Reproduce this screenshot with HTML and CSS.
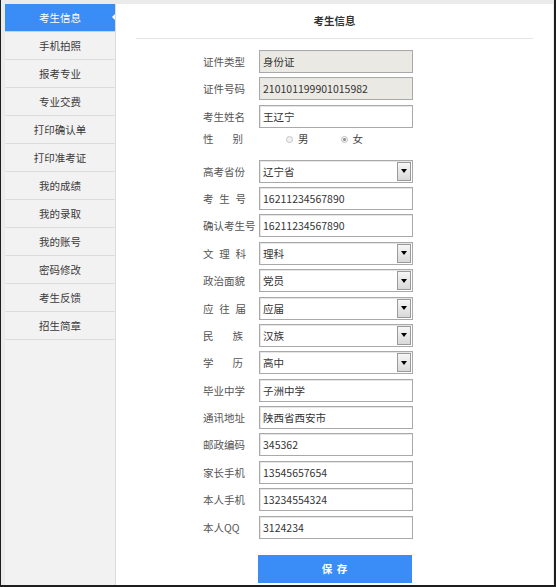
FILE: index.html
```html
<!DOCTYPE html>
<html lang="zh-CN">
<head>
<meta charset="utf-8">
<title>考生信息</title>
<link rel="stylesheet" href="styles.css">
</head>
<body>
<div class="frame">
  <div class="window">
    <aside class="sidebar">
      <div class="nav-item active">考生信息</div>
      <div class="nav-item">手机拍照</div>
      <div class="nav-item">报考专业</div>
      <div class="nav-item">专业交费</div>
      <div class="nav-item">打印确认单</div>
      <div class="nav-item">打印准考证</div>
      <div class="nav-item">我的成绩</div>
      <div class="nav-item">我的录取</div>
      <div class="nav-item">我的账号</div>
      <div class="nav-item">密码修改</div>
      <div class="nav-item">考生反馈</div>
      <div class="nav-item">招生简章</div>
    </aside>
    <main class="main">
      <div class="title">考生信息</div>
      <div class="form">
        <div class="label">证件类型</div>
        <div class="field readonly">身份证</div>

        <div class="label">证件号码</div>
        <div class="field readonly">210101199901015982</div>

        <div class="label">考生姓名</div>
        <div class="field">王辽宁</div>

        <div class="label top"><span class="sp2">性别</span></div>
        <div class="radios">
          <span class="radio"></span><span class="rtext">男</span>
          <span class="radio checked"></span><span class="rtext">女</span>
        </div>

        <div class="label">高考省份</div>
        <div class="field select"><span class="sel-text">辽宁省</span><span class="arrow"></span></div>

        <div class="label"><span class="sp3">考生号</span></div>
        <div class="field">16211234567890</div>

        <div class="label">确认考生号</div>
        <div class="field">16211234567890</div>

        <div class="label"><span class="sp3">文理科</span></div>
        <div class="field select"><span class="sel-text">理科</span><span class="arrow"></span></div>

        <div class="label">政治面貌</div>
        <div class="field select"><span class="sel-text">党员</span><span class="arrow"></span></div>

        <div class="label"><span class="sp3">应往届</span></div>
        <div class="field select"><span class="sel-text">应届</span><span class="arrow"></span></div>

        <div class="label"><span class="sp2">民族</span></div>
        <div class="field select"><span class="sel-text">汉族</span><span class="arrow"></span></div>

        <div class="label"><span class="sp2">学历</span></div>
        <div class="field select"><span class="sel-text">高中</span><span class="arrow"></span></div>

        <div class="label">毕业中学</div>
        <div class="field">子洲中学</div>

        <div class="label">通讯地址</div>
        <div class="field">陕西省西安市</div>

        <div class="label">邮政编码</div>
        <div class="field">345362</div>

        <div class="label">家长手机</div>
        <div class="field">13545657654</div>

        <div class="label">本人手机</div>
        <div class="field">13234554324</div>

        <div class="label">本人QQ</div>
        <div class="field">3124234</div>

        <div class="spacer"></div>
        <div class="save">保&nbsp;存</div>
      </div>
    </main>
  </div>
</div>
</body>
</html>
```

FILE: styles.css
```css
* { box-sizing: border-box; }
html, body {
  margin: 0;
  padding: 0;
}
body {
  width: 556px;
  height: 587px;
  overflow: hidden;
  font-family: "Noto Sans CJK SC", "Liberation Sans", sans-serif;
  font-size: 10.5px;
  color: #333;
}
.frame {
  width: 556px;
  height: 587px;
  background: #ebebeb;
  border-left: 1px solid #1e1e1e;
  border-right: 2px solid #1e1e1e;
  border-bottom: 2px solid #1e1e1e;
  padding: 4px 1px 0 4px;
}
.window {
  display: flex;
  height: 100%;
}
.sidebar {
  width: 111px;
  flex: none;
  background: #f3f2f2;
  border-right: 1px solid #dcdcdc;
}
.nav-item {
  position: relative;
  height: 28px;
  line-height: 27px;
  text-align: center;
  color: #3a3a3a;
  border-bottom: 1px solid #dcdcdc;
}
.nav-item.active {
  background: #3a8cf7;
  color: #fff;
  border-bottom-color: #b9d4f7;
}
.nav-item.active::after {
  content: "";
  position: absolute;
  right: 0;
  top: 10px;
  width: 0;
  height: 0;
  border-top: 3px solid transparent;
  border-bottom: 3px solid transparent;
  border-right: 3px solid #fff;
}
.main {
  flex: 1;
  background: #fff;
}
.title {
  height: 35px;
  line-height: 34px;
  margin: 0 20px;
  text-align: center;
  font-weight: bold;
  color: #333;
  border-bottom: 1px solid #e5e5e5;
}
.form {
  display: grid;
  grid-template-columns: 56px 154px;
  grid-auto-rows: 23px;
  row-gap: 4.4px;
  margin-top: 11px;
  padding-left: 87px;
}
.label {
  display: flex;
  align-items: center;
  white-space: nowrap;
  color: #555;
}
.label.top {
  align-items: flex-start;
  line-height: 14px;
}
.sp2, .sp3 {
  display: inline-block;
  text-align: justify;
  text-align-last: justify;
}
.sp2 { width: 40px; }
.sp3 { width: 43px; }
.field {
  display: flex;
  align-items: center;
  height: 23px;
  border: 1px solid #a9a9a9;
  box-shadow: inset 1px 1px 0 #e6e6e6;
  padding-left: 3px;
  color: #333;
  background: #fff;
  white-space: nowrap;
}
.field.readonly {
  background: #ebe9e4;
}
.field.select {
  padding-right: 1px;
}
.sel-text {
  flex: 1;
}
.arrow {
  width: 14px;
  height: 19px;
  flex: none;
  border: 1px solid #9a9a9a;
  background: linear-gradient(#f6f6f6, #d9d9d9);
  display: flex;
  align-items: center;
  justify-content: center;
}
.arrow::before {
  content: "";
  width: 0;
  height: 0;
  border-left: 3.5px solid transparent;
  border-right: 3.5px solid transparent;
  border-top: 4px solid #000;
}
.radios {
  display: flex;
  align-items: flex-start;
  line-height: 14px;
  padding-left: 27px;
}
.radio {
  width: 7px;
  height: 7px;
  margin-top: 4px;
  border-radius: 50%;
  border: 1px solid #c4c4c4;
  background: #f2f2f2;
  display: flex;
  align-items: center;
  justify-content: center;
}
.radio.checked::before {
  content: "";
  width: 3px;
  height: 3px;
  border-radius: 50%;
  background: #8a8a8a;
}
.rtext {
  margin-left: 5px;
  margin-right: 32px;
  color: #444;
}
.spacer {
  grid-column: 1;
}
.save {
  margin-top: 11.6px;
  margin-left: -1px;
  height: 28px;
  width: 154px;
  background: #3a8cf7;
  color: #fff;
  font-weight: bold;
  text-align: center;
  line-height: 28px;
  letter-spacing: 1px;
}
```
